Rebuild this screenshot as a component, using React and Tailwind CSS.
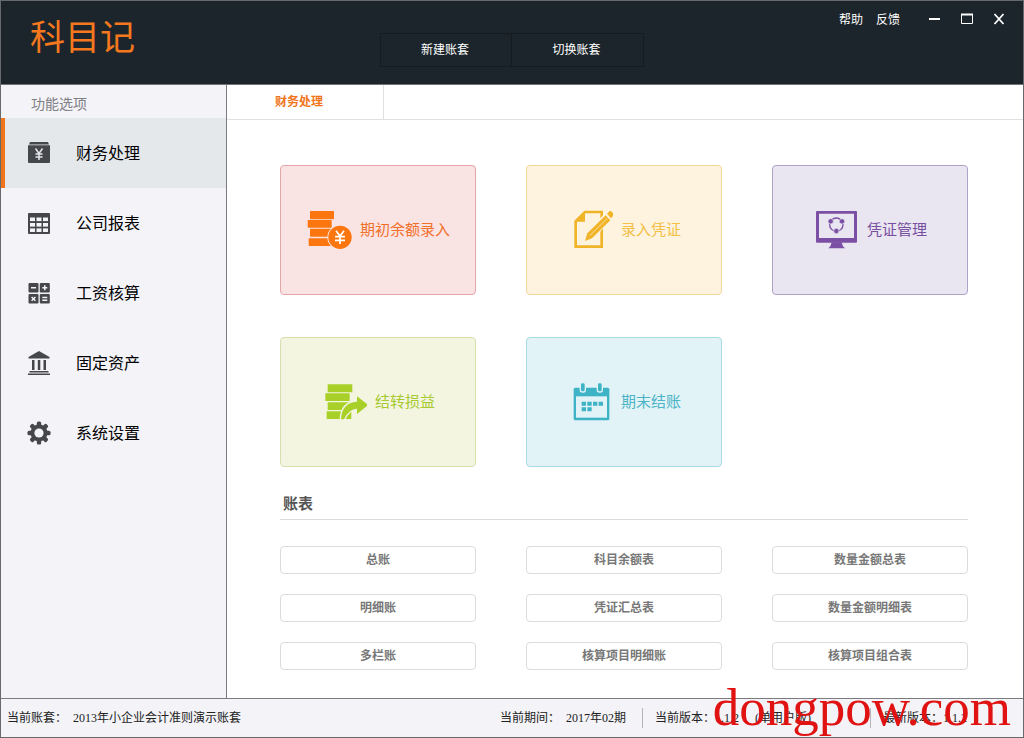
const menuItems = [
    { name: '财务处理', icon: LedgerIcon },
    { name: '公司报表', icon: TableIcon },
    { name: '工资核算', icon: CalculatorIcon },
    { name: '固定资产', icon: BankIcon },
    { name: '系统设置', icon: GearIcon },
];

const cards = [
    { name: '期初余额录入', icon: CoinsIcon, className: 'bg-[#fae4e3] border-[#e3a5a8] text-[#f0702c]' },
    { name: '录入凭证', icon: NoteIcon, className: 'bg-[#fef3de] border-[#f3d998] text-[#f3bf45]' },
    { name: '凭证管理', icon: MonitorIcon, className: 'bg-[#e9e5f1] border-[#b0a3c8] text-[#774fa0]' },
    { name: '结转损益', icon: TransferIcon, className: 'bg-[#f4f5e1] border-[#d8dfae] text-[#a6ca30]' },
    { name: '期末结账', icon: CalendarIcon, className: 'bg-[#e1f3f7] border-[#a9dbe4] text-[#4cb4c6]' },
];

const reports = [
    '总账', '科目余额表', '数量金额总表',
    '明细账', '凭证汇总表', '数量金额明细表',
    '多栏账', '核算项目明细账', '核算项目组合表',
];

function LedgerIcon() {
    return (
        <svg viewBox="0 0 24 24" className="size-6" fill="#46474b">
            <path d="M3 1h18l1 2.600H2z" />
            <path d="M1 4.300h22V21a1 1 0 0 1-1 1H2a1 1 0 0 1-1-1z" />
            <path d="M8.500 7.500 12 12.500l3.500-5M12 12.500V19M8.500 13h7M8.500 16h7" fill="none" stroke="#e4e8eb" strokeWidth="1.500" />
        </svg>
    );
}

function TableIcon() {
    return (
        <svg viewBox="0 0 24 24" className="size-6" fill="#46474b">
            <rect x="1" y="2" width="22" height="21" rx="1" />
            <g fill="#f3f3f8">
                {[6.5, 12, 17.4].map((y) => (
                    <g key={y}>
                        <rect x="3" y={y} width="5" height="3.600" />
                        <rect x="9.500" y={y} width="5" height="3.600" />
                        <rect x="16" y={y} width="5" height="3.600" />
                    </g>
                ))}
            </g>
        </svg>
    );
}

function CalculatorIcon() {
    return (
        <svg viewBox="0 0 24 24" className="size-6" fill="#46474b">
            <rect x="1.500" y="2" width="10" height="9.600" rx="1" />
            <rect x="12.800" y="2" width="10" height="9.600" rx="1" />
            <rect x="1.500" y="13" width="10" height="9.600" rx="1" />
            <rect x="12.800" y="13" width="10" height="9.600" rx="1" />
            <path d="M4 6.800h5M15.300 6.800h5M17.800 4.300v5M4.600 16l3.800 3.800M8.400 16l-3.800 3.800M15.300 16.600h5M15.300 19.200h5" stroke="#f3f3f8" strokeWidth="1.500" />
        </svg>
    );
}

function BankIcon() {
    return (
        <svg viewBox="0 0 24 24" className="size-6" fill="#46474b">
            <path d="M12 0 22.500 6v1.500h-21V6z" />
            <path d="M5 9h2.500v10H5zM10.800 9h2.500v10h-2.500zM16.500 9H19v10h-2.500zM2.500 20h19v1.500h-19zM1 22.500h22V24H1z" />
        </svg>
    );
}

function GearIcon() {
    return (
        <svg viewBox="0 0 24 24" className="size-6" fill="#46474b">
            {[0, 45, 90, 135].map((angle) => (
                <rect key={angle} x="9.800" y="0.500" width="4.400" height="23" rx="1.500" transform={`rotate(${angle} 12 12)`} />
            ))}
            <circle cx="12" cy="12" r="8.500" />
            <circle cx="12" cy="12" r="4.600" fill="#f3f3f8" />
        </svg>
    );
}

function CoinsIcon() {
    return (
        <svg viewBox="0 0 138 120" className="h-10 w-[46px]" fill="#fb760f">
            <rect x="12" y="3" width="72" height="25" rx="2" />
            <rect x="5" y="30" width="72" height="23" rx="2" />
            <rect x="12" y="56" width="64" height="24" rx="2" />
            <rect x="8" y="85" width="68" height="23" rx="2" />
            <circle cx="102" cy="82" r="38" fill="#fae4e3" />
            <circle cx="102" cy="82" r="35" />
            <path d="m90 62 12 16 12-16M102 78v24M87 80h30M87 91h30" fill="none" stroke="#fff" strokeWidth="5" />
        </svg>
    );
}

function NoteIcon() {
    return (
        <svg viewBox="0 0 138 120" className="h-10 w-[46px]" fill="#f0b429">
            <path d="M54 6h50v104H26V34z" fill="none" stroke="#f0b429" strokeWidth="8" />
            <path d="M54 4v31H23z" />
            <path d="M58 94 128 12" stroke="#fef3de" strokeWidth="26" />
            <path d="m54 93 7-23 55-54 14 15-55 54z" />
            <path d="m120 11 7-7q4-2 8 2l4 5q2 4-1 7l-6 7z" />
            <path d="m68 77 53-52" stroke="#fef3de" strokeWidth="2" />
        </svg>
    );
}

function MonitorIcon() {
    return (
        <svg viewBox="0 0 138 120" className="h-10 w-[46px]" fill="#7b4fa3">
            <path fillRule="evenodd" d="M12 3h117q3 0 3 3v89q0 3-3 3H12q-3 0-3-3V6q0-3 3-3zm6 8v73h105V11z" />
            <path d="M56 97h30l4 12 6 6H46l6-6z" />
            <circle cx="70" cy="44" r="20" fill="none" stroke="#7b4fa3" strokeWidth="4" />
            <g stroke="#e9e5f1" strokeWidth="2">
                <circle cx="53" cy="34" r="8" />
                <circle cx="87" cy="34" r="8" />
                <circle cx="70" cy="63" r="8" />
            </g>
        </svg>
    );
}

function TransferIcon() {
    return (
        <svg viewBox="0 0 138 120" className="h-10 w-[46px]" fill="#a9d029">
            <rect x="20" y="7" width="74" height="24" rx="1" />
            <rect x="13" y="34" width="73" height="23" rx="1" />
            <rect x="20" y="61" width="66" height="23" rx="1" />
            <rect x="17" y="88" width="74" height="23" rx="1" />
            <path d="M60 112q2-50 48-53V43l34 26-34 27V80q-24 0-39 32z" stroke="#f4f5e1" strokeWidth="8" />
            <path d="M60 112q2-50 48-53V43l34 26-34 27V80q-24 0-39 32z" />
        </svg>
    );
}

function CalendarIcon() {
    return (
        <svg viewBox="0 0 138 120" className="h-10 w-[46px]" fill="#3eb3c6">
            <rect x="20" y="17" width="107" height="98" rx="5" />
            <rect x="27" y="43" width="93" height="64" fill="#e1f3f7" />
            <rect x="40" y="2" width="15" height="28" rx="6" stroke="#e1f3f7" strokeWidth="4" />
            <rect x="91" y="2" width="15" height="28" rx="6" stroke="#e1f3f7" strokeWidth="4" />
            <path d="M44 59h13v12H44zM61 59h13v12H61zM78 59h13v12H78zM95 59h13v12H95zM44 76h13v12H44zM61 76h13v12H61z" />
        </svg>
    );
}

function Header() {
    return (
        <header className="grid h-[84px] grid-cols-[1fr_auto_1fr] items-start border-b border-[#6d7377] bg-[#1c252b] text-xs text-white">
            <h1 className="pt-3.5 pl-[29px] text-[35px] leading-10 font-normal text-[#f5781e]">科目记</h1>
            <div className="mt-8 flex h-[34px] divide-x divide-[#151c21] border border-[#151c21]">
                <button className="w-[131px] pr-0.5 pb-0.5">新建账套</button>
                <button className="w-[131px] pr-0.5 pb-0.5">切换账套</button>
            </div>
            <div className="flex items-center justify-end gap-[13px] pt-2 pr-[18px]">
                <a href="#help" className="leading-5">帮助</a>
                <a href="#feedback" className="mr-4 leading-5">反馈</a>
                <button aria-label="最小化" className="mr-[7px]">
                    <svg viewBox="0 0 12 12" className="size-3" stroke="#fff" strokeWidth="2">
                        <path d="M0 6h11" />
                    </svg>
                </button>
                <button aria-label="最大化" className="mr-[7px]">
                    <svg viewBox="0 0 12 12" className="size-3" fill="none" stroke="#fff">
                        <path d="M.5 1.500h11v9H.5z" />
                        <path d="M0 1.500h12" strokeWidth="2" />
                    </svg>
                </button>
                <button aria-label="关闭">
                    <svg viewBox="0 0 12 12" className="size-3" stroke="#fff" strokeWidth="1.800">
                        <path d="m1.500 1 9 10M10.500 1l-9 10" />
                    </svg>
                </button>
            </div>
        </header>
    );
}

function Sidebar() {
    return (
        <aside className="w-[226px] shrink-0 border-r border-[#7c7c80] bg-[#f3f3f8]">
            <p className="pt-2 pb-[5px] pl-[30px] text-sm text-[#808084]">功能选项</p>
            <nav>
                {menuItems.map(({ name, icon: Icon }, index) => (
                    <button
                        key={name}
                        className={`flex h-[70px] w-full items-center gap-[25px] border-l-4 pl-[22px] text-base text-black ${
                            index === 0 ? 'border-[#f0741a] bg-[#e4e8eb]' : 'border-transparent'
                        }`}
                    >
                        <Icon />
                        <span className="pb-0.5">{name}</span>
                    </button>
                ))}
            </nav>
        </aside>
    );
}

function StatusBar() {
    return (
        <footer className="flex h-[39px] items-center justify-between border-t border-[#7c7c80] bg-[#f3f3f8] pr-14 pl-1.5 font-['Liberation_Serif','Noto_Sans_CJK_SC',serif] text-xs text-[#222]">
            <p className="flex gap-1.5">
                <span>当前账套：</span>
                <span>2013年小企业会计准则演示账套</span>
            </p>
            <div className="flex items-center gap-3">
                <p className="flex gap-1.5 pr-1">
                    <span>当前期间：</span>
                    <span>2017年02期</span>
                </p>
                <span className="h-5 w-px bg-[#b5b5b8]" />
                <p className="flex w-[203px]">
                    <span>当前版本：</span>
                    <span className="w-10">1.1.2</span>
                    <span>(单用户版)</span>
                </p>
                <span className="h-5 w-px bg-[#b5b5b8]" />
                <p className="flex">
                    <span>最新版本：</span>
                    <span>1.1.2</span>
                </p>
            </div>
        </footer>
    );
}

export default function App() {
    return (
        <div className="relative flex min-h-screen flex-col border border-[#66696d] bg-white font-['Noto_Sans_CJK_SC',sans-serif]">
            <Header />
            <div className="flex flex-1">
                <Sidebar />
                <main className="flex-1">
                    <div className="flex h-[35px] border-b border-[#e0e0e0]">
                        <button className="border-r border-[#e0e0e0] pr-[60px] pb-0.5 pl-12 text-xs font-bold text-[#f0741a]">
                            财务处理
                        </button>
                    </div>
                    <div className="pt-[45px] pr-[55px] pb-7 pl-[53px]">
                        <div className="grid grid-cols-3 gap-x-[50px] gap-y-[42px]">
                            {cards.map(({ name, icon: Icon, className }) => (
                                <button
                                    key={name}
                                    className={`flex h-[130px] items-center justify-center gap-2 rounded border text-[15px] ${className}`}
                                >
                                    <Icon />
                                    <span className="pb-0.5">{name}</span>
                                </button>
                            ))}
                        </div>
                        <h2 className="mt-6 border-b border-[#dcdcdc] pb-1 pl-[3px] text-[15px] leading-6 font-bold text-[#555]">
                            账表
                        </h2>
                        <div className="mt-[26px] grid grid-cols-3 gap-x-[50px] gap-y-5">
                            {reports.map((name) => (
                                <button key={name} className="h-7 rounded border border-[#dcdcdc] pb-0.5 text-xs font-bold text-[#777]">
                                    {name}
                                </button>
                            ))}
                        </div>
                    </div>
                </main>
            </div>
            <StatusBar />
            <span className="pointer-events-none absolute right-3 bottom-[3px] font-['Liberation_Serif',serif] text-[53px] leading-none text-[#e01212]">
                dongpow.com
            </span>
        </div>
    );
}
